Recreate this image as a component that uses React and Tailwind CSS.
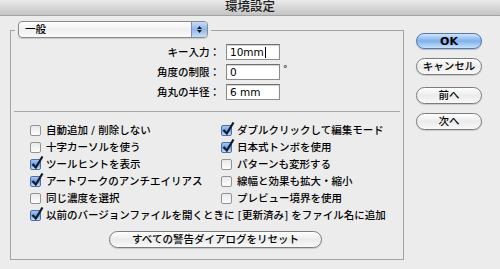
import React from "react";

const FONT = "font-['DejaVu_Sans','Noto_Sans_CJK_JP',sans-serif]";

const App = () => {
  const left = [
    { label: "自動追加 / 削除しない", checked: false },
    { label: "十字カーソルを使う", checked: false },
    { label: "ツールヒントを表示", checked: true },
    { label: "アートワークのアンチエイリアス", checked: true },
    { label: "同じ濃度を選択", checked: false },
  ];
  const right = [
    { label: "ダブルクリックして編集モード", checked: true },
    { label: "日本式トンボを使用", checked: true },
    { label: "パターンも変形する", checked: false },
    { label: "線幅と効果も拡大・縮小", checked: false },
    { label: "プレビュー境界を使用", checked: false },
  ];

  return (
    <div className={`w-[500px] h-[269px] overflow-hidden bg-[#ececec] text-black text-[10.5px] font-medium ${FONT}`}>
      {/* title bar */}
      <div className="h-[16px] flex items-center justify-center bg-linear-to-b from-[#ebebeb] to-[#c4c4c4] border-b border-[#a2a2a2]">
        <span className="text-[12.5px] text-[#1e1e1e] leading-none">環境設定</span>
      </div>

      <div className="flex pt-[14px] pl-[10px]">
        {/* GROUP BOX */}
        <div className="w-[394px] h-[230px] border border-[#a4a4a4] shrink-0">
          <div className="-mt-[10px] ml-[4px] w-[196px] px-[3px] bg-[#ececec]">
            <Popup value="一般" />
          </div>

          <div className="mt-[6px] flex flex-col gap-[4px]">
            <Field label="キー入力：" value="10mm" caret />
            <Field label="角度の制限：" value="0" suffix="°" />
            <Field label="角丸の半径：" value="6 mm" />
          </div>

          <div className="mt-[11px] mx-[3px] h-px bg-[#a8a8a8]" />

          <div className="mt-[10px] pl-[19px] grid grid-cols-[191px_1fr]">
            <div className="flex flex-col">
              {left.map((o) => (
                <CheckRow key={o.label} {...o} />
              ))}
            </div>
            <div className="flex flex-col">
              {right.map((o) => (
                <CheckRow key={o.label} {...o} />
              ))}
            </div>
            <div className="col-span-2">
              <CheckRow label="以前のバージョンファイルを開くときに [更新済み] をファイル名に追加" checked />
            </div>
          </div>

          <div className="mt-[7px] ml-[98px]">
            <PillButton className="w-[213px]">すべての警告ダイアログをリセット</PillButton>
          </div>
        </div>

        {/* BUTTONS */}
        <div className="ml-[12px] mt-[3px] flex flex-col">
          <button className="w-[66px] h-[16px] rounded-full border border-[#5577b0] bg-linear-to-b from-[#d2e4f9] via-[#7eb0ec] to-[#c6e2fb] flex items-center justify-center font-bold text-[11px] leading-none shadow-[0_1px_1px_rgba(0,0,0,0.2)]">
            OK
          </button>
          <PillButton className="w-[66px] mt-[9px]">キャンセル</PillButton>
          <PillButton className="w-[66px] mt-[12px]">前へ</PillButton>
          <PillButton className="w-[66px] mt-[9px]">次へ</PillButton>
        </div>
      </div>
    </div>
  );
};

/* ---------- UI PRIMITIVES ---------- */

const Popup = ({ value }) => (
  <div className="h-[17px] w-[190px] flex rounded-[4px] border border-[#8a8a8a] bg-linear-to-b from-[#ffffff] via-[#f0f0f0] to-[#fafafa] shadow-[0_1px_1px_rgba(0,0,0,0.15)] overflow-hidden">
    <span className="flex-1 pl-[6px] flex items-center leading-none">{value}</span>
    <span className="w-[16px] border-l border-[#7d8fb6] bg-linear-to-b from-[#c9dcf6] via-[#8fb5ea] to-[#c7def8] flex flex-col items-center justify-center gap-[1px]">
      <svg width="5" height="3" viewBox="0 0 5 3">
        <path d="M2.5 0 L5 3 L0 3 Z" fill="#1b1b1b" />
      </svg>
      <svg width="5" height="3" viewBox="0 0 5 3">
        <path d="M0 0 L5 0 L2.5 3 Z" fill="#1b1b1b" />
      </svg>
    </span>
  </div>
);

const Field = ({ label, value, suffix, caret }) => (
  <div className="flex items-center h-[16px]">
    <span className="w-[209px] text-right leading-none">{label}</span>
    <div className="ml-[6px] w-[54px] h-[16px] border border-[#8c8c8c] border-t-[#6e6e6e] bg-white shadow-[inset_0_1px_1px_rgba(0,0,0,0.18)] flex items-center pl-[3px] leading-none">
      {value}
      {caret && <span className="ml-px w-px h-[11px] bg-black" />}
    </div>
    {suffix && <span className="ml-[3px] -mt-[6px] text-[9px] leading-none">{suffix}</span>}
  </div>
);

const Check = ({ checked }) => (
  <span
    className={`relative inline-block w-[11px] h-[11px] shrink-0 rounded-[2px] border ${
      checked
        ? "border-[#4d6ea6] bg-linear-to-b from-[#a7c7f0] via-[#6d9fe3] to-[#c8e0fa]"
        : "border-[#939393] bg-linear-to-b from-[#e9e9e9] to-[#fdfdfd]"
    }`}
  >
    {checked && (
      <svg className="absolute -top-[4px] left-[0px]" width="13" height="14" viewBox="0 0 13 14">
        <path d="M1.5 8 L4.8 11.5 L11.5 0.5" stroke="#131a30" strokeWidth="2.2" fill="none" />
      </svg>
    )}
  </span>
);

const CheckRow = ({ label, checked }) => (
  <div className="flex items-center h-[17px]">
    <Check checked={checked} />
    <span className="ml-[5px] leading-none whitespace-nowrap">{label}</span>
  </div>
);

const PillButton = ({ className = "", children }) => (
  <button
    className={`h-[17px] rounded-full border border-[#7b7b7b] bg-linear-to-b from-[#ffffff] via-[#ebebeb] to-[#f9f9f9] shadow-[0_1px_1px_rgba(0,0,0,0.15)] flex items-center justify-center leading-none text-[10.5px] font-medium ${className}`}
  >
    {children}
  </button>
);

export default App;
